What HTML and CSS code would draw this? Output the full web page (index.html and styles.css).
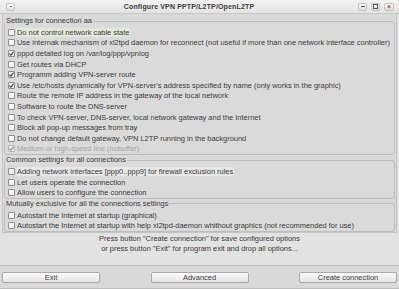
FILE: index.html
```html
<!DOCTYPE html>
<html>
<head>
  <title>Configure VPN PPTP/L2TP/OpenL2TP</title>
  <link rel="stylesheet" href="styles.css">
</head>
<body>
  <div class="window">
    <div class="titlebar">
      <div class="tb-left">
        <span class="tb-btn menu-btn"><span class="dot"></span></span>
      </div>
      <div class="title">Configure VPN PPTP/L2TP/OpenL2TP</div>
      <div class="tb-right">
        <span class="tb-btn"><span class="min"></span></span>
        <span class="tb-btn"><span class="max"></span></span>
        <span class="tb-btn close">&#215;</span>
      </div>
    </div>

    <div class="main">
      <div class="scroll-area">
        <fieldset class="group">
          <legend>Settings for connection aa</legend>
          <div class="row"><span class="box"></span><span class="label focus">Do not control network cable state</span></div>
          <div class="row"><span class="box"></span><span class="label">Use internak mechanism of xl2tpd daemon for reconnect (not useful if more than one network interface controller)</span></div>
          <div class="row"><span class="box checked"><svg viewBox="0 0 7 7"><path d="M1.4 3.6 L2.9 5.1 L5.6 1.6"/></svg></span><span class="label">pppd detailed log on /var/log/ppp/vpnlog</span></div>
          <div class="row"><span class="box"></span><span class="label">Get routes via DHCP</span></div>
          <div class="row"><span class="box checked"><svg viewBox="0 0 7 7"><path d="M1.4 3.6 L2.9 5.1 L5.6 1.6"/></svg></span><span class="label">Programm adding VPN-server route</span></div>
          <div class="row"><span class="box checked"><svg viewBox="0 0 7 7"><path d="M1.4 3.6 L2.9 5.1 L5.6 1.6"/></svg></span><span class="label">Use /etc/hosts dynamically for VPN-server's address specified by name (only works in the graphic)</span></div>
          <div class="row"><span class="box"></span><span class="label">Route the remote IP address in the gateway of the local network</span></div>
          <div class="row"><span class="box"></span><span class="label">Software to route the DNS-server</span></div>
          <div class="row"><span class="box"></span><span class="label">To check VPN-server, DNS-server, local network gateway and the Internet</span></div>
          <div class="row"><span class="box"></span><span class="label">Block all pop-up messages from tray</span></div>
          <div class="row"><span class="box"></span><span class="label">Do not change default gateway, VPN L2TP running in the background</span></div>
          <div class="row disabled"><span class="box checked"><svg viewBox="0 0 7 7"><path d="M1.4 3.6 L2.9 5.1 L5.6 1.6"/></svg></span><span class="label">Medium-or high-speed line (nobuffer)</span></div>
        </fieldset>

        <fieldset class="group">
          <legend>Common settings for all connections</legend>
          <div class="row"><span class="box"></span><span class="label hover">Adding network interfaces [ppp0..ppp9] for firewall exclusion rules</span></div>
          <div class="row"><span class="box"></span><span class="label">Let users operate the connection</span></div>
          <div class="row"><span class="box"></span><span class="label">Allow users to configure the connection</span></div>
        </fieldset>

        <fieldset class="group">
          <legend>Mutually exclusive for all the connections settings</legend>
          <div class="row"><span class="box"></span><span class="label">Autostart the Internet at startup (graphical)</span></div>
          <div class="row"><span class="box"></span><span class="label">Autostart the Internet at startup with help xl2tpd-daemon whithout graphics (not recommended for use)</span></div>
        </fieldset>
      </div>

      <div class="hint">
        Press button "Create connection" for save configured options<br>
        or press button "Exit" for program exit and drop all options...
      </div>
    </div>

    <div class="button-row">
      <button class="btn">Exit</button>
      <button class="btn">Advanced</button>
      <button class="btn">Create connection</button>
    </div>
  </div>
</body>
</html>
```

FILE: styles.css
```css
body {
  margin: 0;
  width: 399px;
  height: 289px;
  overflow: hidden;
  background-color: #d9d9d9;
  font-family: "Liberation Sans", Arial, sans-serif;
  font-size: 7.45px;
  color: #3b3b3b;
}
.window {
  height: 289px;
  display: flex;
  flex-direction: column;
  box-sizing: border-box;
  border-bottom: 1px solid #bdbdbd;
}
.titlebar {
  height: 13px;
  display: grid;
  grid-template-columns: 1fr auto 1fr;
  align-items: center;
  background: linear-gradient(#f2f2f2, #e3e3e3);
  border-bottom: 1px solid #c6c6c6;
  padding: 0 5px 0 6px;
}
.title {
  font-weight: bold;
  font-size: 7px;
  color: #3c3c3c;
  letter-spacing: 0.15px;
  margin-right: 22px;
}
.tb-left {
  display: flex;
}
.tb-right {
  display: flex;
  justify-content: flex-end;
  gap: 4px;
}
.tb-btn {
  width: 7px;
  height: 6px;
  border: 1px solid #c2c2c2;
  border-radius: 2px;
  background: linear-gradient(#fafafa, #dedede);
  display: flex;
  align-items: center;
  justify-content: center;
  box-sizing: content-box;
}
.menu-btn .dot {
  width: 2px;
  height: 1px;
  background-color: #666;
}
.min {
  width: 4px;
  height: 1px;
  background-color: #555;
}
.max {
  width: 3px;
  height: 3px;
  border: 1px solid #555;
  border-top-width: 1.5px;
}
.close {
  width: 8px;
  color: #d8342c;
  font-weight: bold;
  font-size: 7px;
  line-height: 6px;
}
.main {
  padding: 0 2px;
  background-color: #e2e2e2;
  border-bottom: 1px solid #c0c0c0;
}
.scroll-area {
  background-color: #dadada;
  border: 1px solid #c4c4c4;
  border-top: none;
  padding: 2px 1px 0 1px;
}
.group {
  margin: 0;
  padding: 1px 0 0 3px;
  border: 1px solid #bcbcbc;
  border-radius: 3px;
}
.group legend {
  margin-left: -3px;
  padding: 0 1px;
  line-height: 10px;
  color: #3b3b3b;
}
.row {
  height: 10.6px;
  display: flex;
  align-items: center;
  white-space: nowrap;
}
.box {
  width: 7px;
  height: 7px;
  box-sizing: border-box;
  border: 1px solid #8e8e8e;
  border-radius: 1px;
  background: linear-gradient(#ffffff, #ececec);
  margin-right: 2px;
  flex-shrink: 0;
  position: relative;
}
.box svg {
  position: absolute;
  left: -1px;
  top: -1px;
  width: 7px;
  height: 7px;
}
.box svg path {
  fill: none;
  stroke: #3d3d3d;
  stroke-width: 1.1;
}
.label {
  padding: 0 1px;
  margin-left: -1px;
  line-height: 9px;
  border-radius: 2px;
}
.label.focus {
  background-color: #e3e8db;
}
.label.hover {
  background-color: #e7e7e7;
}
.disabled {
  color: #a6a6a6;
}
.disabled .box {
  border-color: #b9b9b9;
  background: #e6e6e6;
}
.disabled .box svg path {
  stroke: #9a9a9a;
}
.hint {
  height: 32px;
  box-sizing: border-box;
  padding-top: 1px;
  text-align: center;
  line-height: 10px;
  color: #3b3b3b;
}
.button-row {
  display: grid;
  grid-template-columns: 98px 98px 98px;
  justify-content: space-between;
  padding: 6px 2px 0 2px;
  flex-grow: 1;
}
.btn {
  height: 11px;
  padding: 0;
  border: 1px solid #a9a9a9;
  border-radius: 2px;
  background: linear-gradient(#fcfcfc, #e4e4e4);
  font-family: inherit;
  font-size: 7.45px;
  color: #3b3b3b;
  line-height: 9px;
}
```
